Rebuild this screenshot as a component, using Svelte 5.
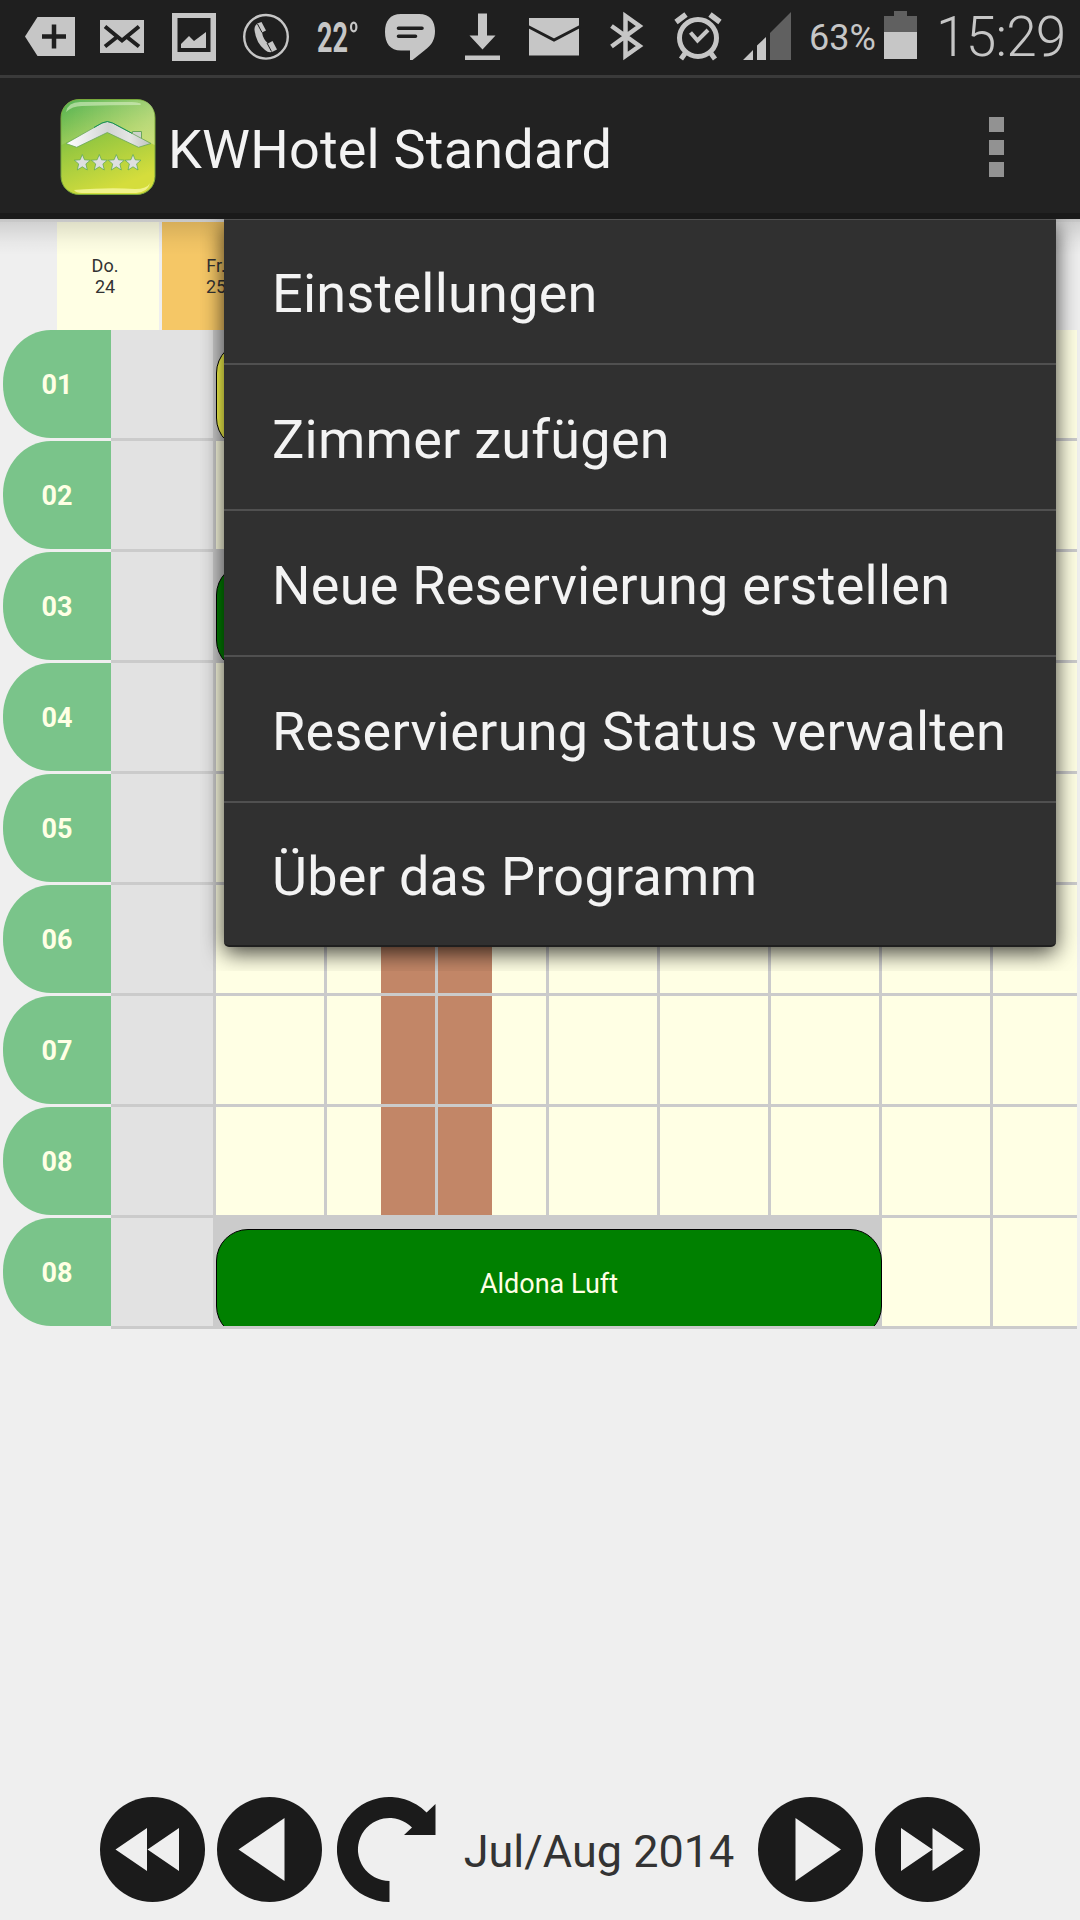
<script lang="ts">
  interface Reservation {
    guest: string;
    color: string;
  }

  interface Room {
    name: string;
    reservation?: Reservation;
    blocked?: boolean;
  }

  const rooms: Room[] = [
    { name: '01', reservation: { guest: '', color: '#ffff50' } },
    { name: '02' },
    { name: '03', reservation: { guest: '', color: '#008000' } },
    { name: '04' },
    { name: '05' },
    { name: '06', blocked: true },
    { name: '07', blocked: true },
    { name: '08', blocked: true },
    { name: '08', reservation: { guest: 'Aldona Luft', color: '#008000' } },
  ];

  const days = [
    { label: 'Do.', date: 24 },
    { label: 'Fr.', date: 25 },
  ];

  const menu = [
    'Einstellungen',
    'Zimmer zufügen',
    'Neue Reservierung erstellen',
    'Reservierung Status verwalten',
    'Über das Programm',
  ];

  let menuOpen = $state(true);
</script>

<div class="screen">
  <div class="status">
    <svg class="icon" viewBox="0 0 72 75">
      <path d="M11 36.5 23.5 17H61V56H23.5Z" />
      <path class="cut" d="M28 36.5H52M40 24.5V48.5" stroke-width="4.5" />
    </svg>
    <svg class="icon" viewBox="0 0 72 75">
      <path d="M14 20H58V53H14Z" />
      <path class="cut" d="M19 26.5 36 40.5 53 26.5M19 46.5 31 37M53 46.5 41 37" stroke-width="4" />
    </svg>
    <svg class="icon" viewBox="0 0 72 75">
      <path fill-rule="evenodd" d="M14 13H58V61H14ZM19.5 18V52H52.5V18Z" />
      <path d="M23 48V44L31 36 36 41 48 32V48Z" />
    </svg>
    <svg class="icon" viewBox="0 0 72 75">
      <circle class="line" cx="36" cy="36.8" r="21.8" stroke-width="2.4" />
      <path d="M30 22.5Q24 24 24.5 30Q26 43 35 50Q39 53.5 43 51.5L47 49.5 42.5 41 38 43.5Q33 39 32 32.5L36 30.5 31.5 22Z" />
      <path class="cut" d="M27.5 24 32 32.5M37 43 41.5 51.5" stroke-width="1" />
    </svg>
    <svg class="icon" viewBox="0 0 72 75">
      <text class="temp" x="15" y="52" textLength="31" lengthAdjust="spacingAndGlyphs">22</text>
      <ellipse class="line" cx="51.7" cy="27" rx="2.7" ry="4.3" stroke-width="2.2" />
    </svg>
    <svg class="icon" viewBox="0 0 72 75">
      <path d="M27 14H45C56 14 61 21 61 31C61 39 58 45 51 50L38.5 60H36V50.5H27C16 50.5 11 43 11 32C11 21 16 14 27 14Z" />
      <path class="cut" d="M24.5 28.3H48M24.5 36.3H41.5" stroke-width="3.6" stroke-linecap="round" />
    </svg>
    <svg class="icon" viewBox="0 0 72 75">
      <path d="M32 13.5H41V35.5H49.5L36.5 49.5 23.5 35.5H32ZM19 55.5H54V60H19Z" />
    </svg>
    <svg class="icon" viewBox="0 0 72 75">
      <path d="M11 18H61V55.5H11Z" />
      <path class="cut" d="M10 26.5 36 40 62 26.5" stroke-width="3" />
    </svg>
    <svg class="icon" viewBox="0 0 72 75">
      <path class="line" d="M21.5 26 49.5 46 35.5 56V16L49.5 26 21.5 46.5" stroke-width="4.5" />
    </svg>
    <svg class="icon" viewBox="0 0 72 75">
      <circle class="line" cx="36" cy="38" r="18.5" stroke-width="5" />
      <path class="line" d="M28.5 32.5 35.5 40.5 46 30" stroke-width="4" />
      <path class="line" d="M14 22 24 14.5M48 14.5 58 22" stroke-width="5.5" />
      <path class="line" d="M24 52 19 59M48 52 53 59" stroke-width="5" />
    </svg>
    <svg class="icon" viewBox="0 0 72 75">
      <path d="M9 60 19 50V60ZM23 60V45.5L32 37V60Z" />
      <path class="dim" d="M36 60V33L57 12V60Z" />
    </svg>
    <span class="percent">63%</span>
    <svg class="battery" viewBox="0 0 33 75">
      <path class="dim" d="M10 11H23V16H33V32H0V16H10Z" />
      <path d="M0 32H33V59H0Z" />
    </svg>
    <span class="clock">15:29</span>
  </div>

  <header class="appbar">
    <svg class="logo" viewBox="0 0 96 96">
      <defs>
        <linearGradient id="tile" x1="0" y1="0" x2="0.4" y2="1">
          <stop offset="0" stop-color="#45ad49" />
          <stop offset="0.5" stop-color="#98c840" />
          <stop offset="1" stop-color="#d5dd3c" />
        </linearGradient>
        <linearGradient id="gloss" x1="0" y1="0" x2="1" y2="0.3">
          <stop offset="0" stop-color="#fff" stop-opacity="0.05" />
          <stop offset="1" stop-color="#fff" stop-opacity="0.3" />
        </linearGradient>
        <linearGradient id="roof" x1="0" y1="0" x2="1" y2="0">
          <stop offset="0" stop-color="#fff" />
          <stop offset="0.5" stop-color="#d2d5d4" />
          <stop offset="0.75" stop-color="#e4e5e4" />
          <stop offset="1" stop-color="#bfc3bf" />
        </linearGradient>
      </defs>
      <rect x="1" y="0.5" width="94" height="95" rx="18" fill="url(#tile)" stroke="#79a83c" />
      <path d="M1.5 46V19Q1.5 1 19 1H77Q94.5 1 94.5 19V46Q48 18 1.5 46Z" fill="url(#gloss)" />
      <path d="M6 13Q8 3 20 3H72Q84 4 80 6 50 6 22 7 12 7 6 13Z" fill="#d8efc4" opacity="0.6" />
      <path d="M14 91Q50 88 75 90 87 90 90 84 88 93 76 94H22Q16 94 14 91Z" fill="#f7f7a0" opacity="0.8" />
      <path d="M72.5 32.5H81.5V41L72.5 37Z" fill="#cfd3cc" stroke="#6aa75b" />
      <path
        d="M6 44.5 42 24Q47.3 21 52.6 24L91 44.5 78.5 48.3 47.3 33.5 16.7 48.3Z"
        fill="url(#roof)"
        stroke="#6aa75b"
        stroke-width="0.8"
      />
      <path d="M34 28.5 42 24Q47.3 21 52.6 24L72 34.3" fill="none" stroke="#159257" />
      {#each [22.3, 39.3, 56.3, 73] as x (x)}
        <path
          transform="translate({x} 64)"
          d="M0-8.5 2.2-3.2 8-2.8 3.6.9 5 7 0 3.8-5 7-3.6.9-8-2.8-2.2-3.2Z"
          fill="#dedfdf"
          stroke="#57a552"
          stroke-width="0.7"
        />
      {/each}
    </svg>
    <h1>KWHotel Standard</h1>
    <button class="overflow" aria-label="Menü" onclick={() => (menuOpen = !menuOpen)}>
      <i></i><i></i><i></i>
    </button>
  </header>

  <main>
    <div class="days">
      {#each days as day, i (day.date)}
        <div class="day" class:clipped={i === 0} class:today={i === 1}>
          <span>{day.label}</span>
          <span>{day.date}</span>
        </div>
      {/each}
    </div>

    {#each rooms as room}
      <div class="room">
        <div class="label">{room.name}</div>
        <div class="cells">
          <div class="cell past"></div>
          {#if room.reservation}
            <div class="booked">
              <div class="reservation" style="background: {room.reservation.color}">
                {room.reservation.guest}
              </div>
            </div>
            <div class="cell"></div>
            <div class="cell"></div>
          {:else}
            {#each Array(8) as _, i}
              <div
                class="cell"
                class:block-end={room.blocked && i === 1}
                class:block-start={room.blocked && i === 2}
              ></div>
            {/each}
          {/if}
        </div>
      </div>
    {/each}

    {#if menuOpen}
      <div class="menu">
        {#each menu as item (item)}
          <button class="item">{item}</button>
        {/each}
      </div>
    {/if}
  </main>

  <footer>
    <svg class="nav" viewBox="0 0 105 105">
      <circle cx="52.5" cy="52.5" r="52.5" />
      <path class="arrow" d="M15.5 52.5 47 31V74ZM47.5 52.5 79 31V74Z" />
    </svg>
    <svg class="nav" viewBox="0 0 105 105">
      <circle cx="52.5" cy="52.5" r="52.5" />
      <path class="arrow" d="M21.5 52.5 67.5 21V84Z" />
    </svg>
    <svg class="nav refresh" viewBox="0 0 105 105">
      <path d="M52.5 105A52.5 52.5 0 1 1 89.6 15.4L98.5 7V38H67L75 30.5A31.5 31.5 0 1 0 52.5 84Z" />
    </svg>
    <span class="month">Jul/Aug 2014</span>
    <svg class="nav" viewBox="0 0 105 105">
      <circle cx="52.5" cy="52.5" r="52.5" />
      <path class="arrow" d="M83 52.5 37.5 21V84Z" />
    </svg>
    <svg class="nav" viewBox="0 0 105 105">
      <circle cx="52.5" cy="52.5" r="52.5" />
      <path class="arrow" d="M57.5 52.5 26 31V74ZM89 52.5 57.5 31V74Z" />
    </svg>
  </footer>
</div>

<style>
  :global(body) {
    margin: 0;
    background: #efefef;
  }

  .screen {
    display: flex;
    flex-direction: column;
    width: 1080px;
    height: 1920px;
    overflow: hidden;
    background: #efefef;
    font-family: Roboto, 'Liberation Sans', sans-serif;
  }

  .status {
    display: flex;
    flex: none;
    box-sizing: border-box;
    height: 78px;
    padding-left: 14px;
    border-bottom: 3px solid #3a3a3a;
    background: #1f1f1f;
    color: #c6c6c6;
    fill: #c6c6c6;
    white-space: nowrap;
  }

  .icon {
    flex: none;
    width: 72px;
    height: 75px;
  }

  .cut {
    fill: none;
    stroke: #1f1f1f;
  }

  .line {
    fill: none;
    stroke: #c6c6c6;
  }

  .dim {
    fill: #606060;
  }

  .temp {
    font-size: 43px;
    font-weight: 700;
  }

  .percent {
    width: 75px;
    padding-left: 3px;
    font-size: 36px;
    line-height: 77px;
  }

  .battery {
    flex: none;
    width: 33px;
    height: 75px;
  }

  .clock {
    padding-left: 19px;
    font-size: 55px;
    font-weight: 300;
    letter-spacing: -0.8px;
    line-height: 74px;
  }

  .appbar {
    display: flex;
    flex: none;
    align-items: center;
    box-sizing: border-box;
    height: 141px;
    padding: 3px 76px 0 60px;
    border-bottom: 6px solid #1a1a1a;
    background: #222;
  }

  .logo {
    width: 96px;
    height: 96px;
  }

  h1 {
    flex: 1;
    margin: 0 0 0 12px;
    padding-top: 5px;
    color: #f3f3f3;
    font-size: 54px;
    font-weight: 400;
    letter-spacing: 0.2px;
    line-height: 64px;
  }

  .overflow {
    display: flex;
    flex-direction: column;
    gap: 7.5px;
    padding: 0;
    border: none;
    background: none;
  }

  .overflow i {
    width: 15px;
    height: 15px;
    background: #929292;
  }

  main {
    position: relative;
    flex: none;
  }

  main::before {
    content: '';
    position: absolute;
    inset: 0 0 auto;
    height: 36px;
    background: linear-gradient(rgba(0, 0, 0, 0.14), rgba(0, 0, 0, 0.03) 65%, transparent);
  }

  .days {
    display: flex;
    gap: 3px;
    padding-left: 57px;
    border-top: 3px solid #e6e6e6;
  }

  .day {
    display: flex;
    flex-direction: column;
    align-items: center;
    justify-content: center;
    width: 108px;
    height: 108px;
    background: #ffffe4;
    color: #333;
    font-size: 18px;
    line-height: 21px;
  }

  .clipped {
    box-sizing: border-box;
    width: 102px;
    padding-right: 6px;
  }

  .today {
    background: #f5c766;
  }

  .room {
    display: flex;
    padding-left: 3px;
  }

  .label {
    width: 108px;
    height: 108px;
    border-radius: 48px 0 0 48px / 53px 0 0 53px;
    background: #7ac48a;
    color: #ffffe4;
    font-size: 27px;
    font-weight: 700;
    line-height: 110px;
    text-align: center;
  }

  .cells {
    display: grid;
    grid-template-columns: 102px repeat(7, 108px) 84px;
    grid-template-rows: 108px;
    column-gap: 3px;
    padding-bottom: 3px;
    background: #cbcbcb;
  }

  .cell {
    background: #ffffe4;
  }

  .past {
    background: #e2e2e2;
  }

  .block-end {
    background: linear-gradient(90deg, #ffffe4 54px, #c28667 54px);
  }

  .block-start {
    background: linear-gradient(90deg, #c28667 54px, #ffffe4 54px);
  }

  .booked {
    grid-column: span 6;
    margin-right: -3px;
    overflow: hidden;
  }

  .reservation {
    box-sizing: border-box;
    height: 109px;
    margin-top: 11px;
    border: 1px solid #000;
    border-radius: 32px;
    color: #ffffe4;
    font-size: 27px;
    line-height: 109px;
    text-align: center;
  }

  .menu {
    position: absolute;
    top: 0;
    right: 24px;
    display: flex;
    flex-direction: column;
    box-sizing: border-box;
    width: 832px;
    height: 728px;
    border-top: 1px solid #505050;
    border-bottom: 2px solid #1f1f1f;
    border-radius: 0 0 5px 5px;
    background: #303030;
    box-shadow: 0 6px 22px rgba(0, 0, 0, 0.75);
    clip-path: inset(0 -24px -24px -24px);
  }

  .item {
    flex: none;
    box-sizing: border-box;
    height: 146px;
    padding: 4px 0 0 48px;
    border: none;
    border-bottom: 2px solid #505050;
    background: none;
    color: #f3f3f3;
    font: inherit;
    font-size: 54px;
    letter-spacing: 0.25px;
    text-align: left;
    white-space: nowrap;
  }

  .item:first-child {
    height: 145px;
    padding-top: 3px;
  }

  .item:last-child {
    height: 142px;
    border-bottom: none;
  }

  footer {
    display: flex;
    align-items: center;
    gap: 12px;
    margin-top: auto;
    padding: 0 100px 18px;
  }

  .nav {
    flex: none;
    width: 105px;
    height: 105px;
    fill: #1b1b1b;
  }

  .refresh {
    margin-left: 3px;
  }

  .arrow {
    fill: #efefef;
  }

  .month {
    flex: 1;
    padding: 4px 2px 0 0;
    color: #333;
    font-size: 45px;
    text-align: center;
    white-space: nowrap;
  }
</style>
